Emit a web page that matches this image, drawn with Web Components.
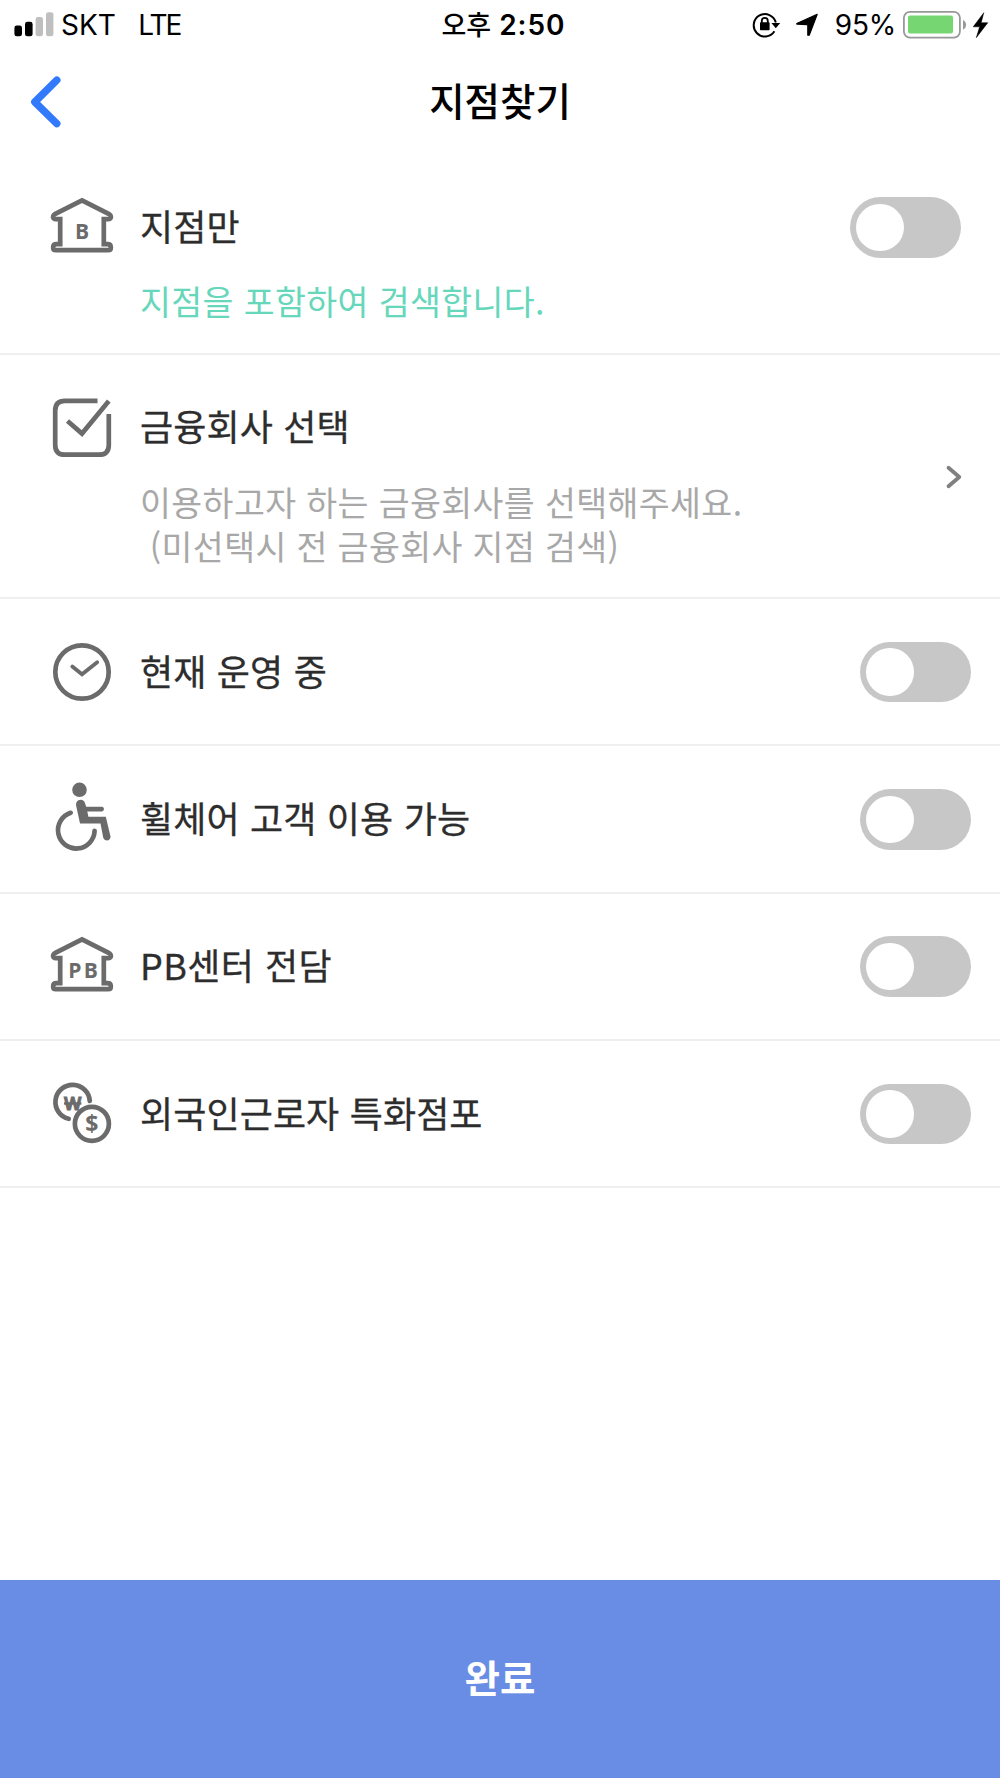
<!DOCTYPE html>
<html lang="ko">
<head>
<meta charset="UTF-8">
<meta name="viewport" content="width=device-width, initial-scale=1.0">
<title>지점찾기</title>
<style>
  :root{
    --blue: #327afb;
    --button-blue: #698de4;
    --mint: #66d7bb;
    --dark: #2d2d2d;
    --gray: #a8a8a8;
    --icon: #6b6b6b;
    --line: #efefef;
    --switch: #c7c7c7;
  }

  body{
    margin: 0;
    background-color: #fff;
    font-family: "Noto Sans CJK KR", sans-serif;
  }
</style>
</head>
<body>
<branch-screen>
  <status-bar slot="status" carrier="SKT" network="LTE" battery="95%"><span>오후</span> 2:50</status-bar>
  <nav-header slot="header">지점찾기</nav-header>

  <filter-row class="first" icon="bank" label="B">
    <span slot="title">지점만</span>
    <span slot="details" class="mint">지점을 포함하여 검색합니다.</span>
    <toggle-switch slot="control"></toggle-switch>
  </filter-row>
  <filter-row class="company" icon="check">
    <span slot="title">금융회사 선택</span>
    <span slot="details">이용하고자 하는 금융회사를 선택해주세요.<br>&nbsp;(미선택시 전 금융회사 지점 검색)</span>
    <chevron-right slot="control"></chevron-right>
  </filter-row>
  <filter-row icon="clock">
    <span slot="title">현재 운영 중</span>
    <toggle-switch slot="control"></toggle-switch>
  </filter-row>
  <filter-row icon="wheelchair">
    <span slot="title">휠체어 고객 이용 가능</span>
    <toggle-switch slot="control"></toggle-switch>
  </filter-row>
  <filter-row class="wide" icon="bank" label="PB">
    <span slot="title">PB센터 전담</span>
    <toggle-switch slot="control"></toggle-switch>
  </filter-row>
  <filter-row icon="coins">
    <span slot="title">외국인근로자 특화점포</span>
    <toggle-switch slot="control"></toggle-switch>
  </filter-row>

  <done-button slot="footer">완료</done-button>
</branch-screen>

<script>
class BaseElement extends HTMLElement {
  constructor(){
    super();
    this.attachShadow({mode: 'open'});
  }

  connectedCallback(){
    const template = document.createElement('template');
    template.innerHTML = this.getStyles() + this.getTemplate();
    this.shadowRoot.replaceChildren(template.content.cloneNode(true));
  }
}

class BranchScreen extends BaseElement {
  getTemplate(){
    return `
      <slot name="status"></slot>
      <slot name="header"></slot>
      <main><slot></slot></main>
      <slot name="footer"></slot>
    `;
  }

  getStyles(){
    return `
    <style>
      :host{
        display: flex;
        flex-direction: column;
        width: 1000px;
        height: 1778px;
        overflow: hidden;
      }

      main{
        flex: 1;
      }
    </style>
    `;
  }
}

class StatusBar extends BaseElement {
  getTemplate(){
    return `
      <div class="side">
        <svg class="signal" width="40" height="26" viewBox="14 12 40 26">
          <rect x="14.4" y="25.5" width="7.6" height="10.8" rx="2.4"/>
          <rect x="25" y="21.8" width="7.6" height="14.5" rx="2.4"/>
          <rect x="35.6" y="17" width="7.4" height="19.3" rx="2.4" fill="#bfbfbf"/>
          <rect x="46" y="12.2" width="7.4" height="24.1" rx="2.4" fill="#bfbfbf"/>
        </svg>
        <span class="carrier">${this.getAttribute('carrier')}</span>
        <span class="network">${this.getAttribute('network')}</span>
      </div>
      <div class="time"><slot></slot></div>
      <div class="side right">
        <svg width="68" height="28" viewBox="752 11 68 28">
          <path d="M774.4 31.3A11.2 11.2 0 1 1 775.8 22.6" fill="none" stroke="#000" stroke-width="2"/>
          <path d="M771.4 23h8.8l-4.4 5.2z"/>
          <rect x="760" y="22.2" width="9.6" height="8" rx=".8"/>
          <path d="M761.8 23v-2a3 3.2 0 0 1 6 0v2" fill="none" stroke="#000" stroke-width="1.8"/>
          <path d="M817.2 14.4 809.2 35.2h-1.4V25.4q0-.8-.8-.8l-10.2-.5v-.6z" stroke="#000" stroke-width="1.2" stroke-linejoin="round"/>
        </svg>
        <span class="percent">${this.getAttribute('battery')}</span>
        <svg class="battery" width="88" height="30" viewBox="902 9.5 88 30">
          <rect x="903.9" y="11.3" width="56" height="25.8" rx="6" fill="none" stroke="#989898" stroke-width="1.8"/>
          <rect x="908" y="15" width="45" height="18" rx="2" fill="#76d672"/>
          <path d="M963 19.2q3.2 2 3.2 5t-3.2 5z" fill="#989898"/>
          <path d="M983.8 12.2 973.2 26.3h6.4l-3.3 10.9 11.5-15h-6.6z" stroke="#000" stroke-width=".5"/>
        </svg>
      </div>
    `;
  }

  getStyles(){
    return `
    <style>
      :host{
        display: grid;
        grid-template-columns: 1fr auto 1fr;
        align-items: center;
        height: 50px;
        padding: 0 10px 0 14px;
        box-sizing: border-box;
        font: 400 28px/50px Inter, "Noto Sans CJK KR", sans-serif;
        color: #000;
      }

      .side{
        display: flex;
        align-items: center;
        height: 50px;
      }

      .right{
        justify-content: flex-end;
      }

      .carrier{
        margin-left: 7px;
      }

      .network{
        margin-left: 22.5px;
        letter-spacing: -2px;
      }

      .time{
        padding-left: 3px;
        font-weight: 600;
        letter-spacing: 1px;
      }

      ::slotted(span){
        font: 500 27px "Noto Sans CJK KR", sans-serif;
        letter-spacing: 0;
      }

      .percent{
        margin: 0 6px 0 15px;
        letter-spacing: -.2px;
      }
    </style>
    `;
  }
}

class NavHeader extends BaseElement {
  getTemplate(){
    return `
      <svg width="34" height="54" viewBox="29 75 34 54" fill="none" stroke="var(--blue)" stroke-width="7.4" stroke-linecap="round" stroke-linejoin="round">
        <path d="M56.8 80.2 34.8 102l22 21.6"/>
      </svg>
      <h1><slot></slot></h1>
    `;
  }

  getStyles(){
    return `
    <style>
      :host{
        display: grid;
        grid-template-columns: 34px 1fr 34px;
        align-items: center;
        height: 104px;
        padding: 0 29px;
      }

      h1{
        margin: 0;
        padding-bottom: 6px;
        font-size: 38.5px;
        font-weight: 500;
        line-height: 56px;
        text-align: center;
        color: #000;
      }
    </style>
    `;
  }
}

class FilterRow extends BaseElement {
  getTemplate(){
    return `
      <filter-icon name="${this.getAttribute('icon')}" label="${this.getAttribute('label') || ''}"></filter-icon>
      <div class="text">
        <h2><slot name="title"></slot></h2>
        <p><slot name="details"></slot></p>
      </div>
      <div class="control"><slot name="control"></slot></div>
    `;
  }

  getStyles(){
    return `
    <style>
      :host{
        display: flex;
        align-items: center;
        box-sizing: border-box;
        height: 147.3px;
        padding: 0 29px 0 50px;
        border-bottom: 2px solid var(--line);
      }

      :host(.first){
        align-items: flex-start;
        height: 201px;
        padding: 37px 39px 0 50px;
      }

      :host(.company){
        align-items: flex-start;
        height: 244px;
        padding: 36px 37px 0 50px;
      }

      .text{
        flex: 1;
        margin-left: 26px;
      }

      h2{
        margin: 0;
        padding-bottom: 4px;
        font-size: 36px;
        font-weight: 400;
        line-height: 68px;
        color: var(--dark);
        letter-spacing: .1px;
        word-spacing: .2px;
        -webkit-text-stroke: .3px;
      }

      :host(.wide) h2{
        letter-spacing: .4px;
      }

      p{
        margin: 0;
        font-size: 33.6px;
        font-weight: 400;
        line-height: 43.5px;
        color: var(--gray);
        letter-spacing: .4px;
      }

      :host(.first) p{
        margin-top: 16px;
      }

      :host(.company) p{
        margin-top: 17px;
      }

      ::slotted(.mint){
        color: var(--mint);
      }

      .control{
        padding-top: 1px;
      }

      :host(.first) .control{
        padding-top: 6px;
      }

      :host(.company) .control{
        padding-top: 73px;
      }
    </style>
    `;
  }
}

class FilterIcon extends BaseElement {
  getTemplate(){
    const label = this.getAttribute('label');
    const icons = {
      bank: `
        <path d="M32 9.4 58.6 22.8Q61 24.3 60.9 26.2 60.3 28.5 57.5 28.2H53.8V53.2H57.5Q60.8 53.2 60.8 56V57Q60.8 59.2 58.3 59.2H5.7Q3.2 59.2 3.2 57V56Q3.2 53.2 6.5 53.2H10.2V28.2H6.5Q3.7 28.5 3.1 26.2 3 24.3 5.4 22.8Z"/>
        <text x="${label === 'PB' ? 34.3 : 32}" y="47.8" font-size="21" letter-spacing="${label === 'PB' ? 2.4 : 0}">${label}</text>
      `,
      check: `
        <path d="M47.5 9.8H15Q5.2 9.8 5.2 19.6V53.9Q5.2 63.7 15 63.7H49Q58.8 63.7 58.8 53.9V23"/>
        <path d="M17.5 30 32 42.6 58.8 10"/>
      `,
      clock: `
        <circle cx="32" cy="36" r="26.7"/>
        <path d="M22.3 30.6 32 38.3 47.2 26.2" stroke-width="3.8" stroke-linecap="round"/>
      `,
      wheelchair: `
        <circle class="fill" cx="29.5" cy="6.8" r="7.3"/>
        <path d="M20.7 29.8A18.3 18.3 0 1 0 44.6 47.8" stroke-linecap="round"/>
        <path class="fill" d="M26 22Q26 17 30.5 16.800 34.3 16.9 35.2 20.7L36.2 23.7H52Q54 24 54 26T52 28.400H37.3L38.4 33.8H55.8L60.5 53.5Q60.5 56.5 57.5 57.5 54 57.5 53.2 54.5L50.5 40.5H30Z"/>
      `,
      coins: `
        <path d="M39.8 23A17.2 17.2 0 1 0 18.7 40.8" stroke-linecap="round"/>
        <text class="won" x="22.7" y="31.6" font-size="18">W</text>
        <path d="M14 25.5h17.4" stroke-width="2.4"/>
        <circle cx="41.9" cy="45.8" r="17"/>
        <text x="41.9" y="54" font-size="23">$</text>
      `
    };
    return `<svg width="64" height="72" viewBox="0 0 64 72" overflow="visible">${icons[this.getAttribute('name')]}</svg>`;
  }

  getStyles(){
    return `
    <style>
      :host{
        display: block;
        width: 64px;
        height: 72px;
      }

      svg{
        display: block;
        fill: none;
        stroke: var(--icon);
        stroke-width: 4.7;
      }

      .fill,
      text{
        fill: var(--icon);
        stroke: none;
      }

      text{
        font-family: "Open Sans", sans-serif;
        font-weight: 700;
        text-anchor: middle;
      }

      .won{
        stroke: var(--icon);
        stroke-width: .8;
      }
    </style>
    `;
  }
}

class ToggleSwitch extends BaseElement {
  getTemplate(){
    return `<div class="knob"></div>`;
  }

  getStyles(){
    return `
    <style>
      :host{
        display: flex;
        align-items: center;
        box-sizing: border-box;
        width: 111px;
        height: 60.5px;
        padding: 0 6.3px;
        border-radius: 31px;
        background-color: var(--switch);
      }

      .knob{
        width: 47.5px;
        height: 47.5px;
        border-radius: 50%;
        background-color: #fff;
      }
    </style>
    `;
  }
}

class ChevronRight extends BaseElement {
  getTemplate(){
    return `
      <svg width="18" height="26" viewBox="945 464 18 26" fill="none" stroke="#808080" stroke-width="3.8" stroke-linecap="round" stroke-linejoin="round">
        <path d="M948.5 467.8 959.3 477l-10.8 9.3"/>
      </svg>
    `;
  }

  getStyles(){
    return `
    <style>
      :host,
      svg{
        display: block;
      }
    </style>
    `;
  }
}

class DoneButton extends BaseElement {
  getTemplate(){
    return `<button><slot></slot></button>`;
  }

  getStyles(){
    return `
    <style>
      :host{
        display: block;
      }

      button{
        display: block;
        width: 100%;
        height: 198.5px;
        padding: 0 0 5px;
        border: 0;
        background-color: var(--button-blue);
        color: #fff;
        font-family: inherit;
        font-size: 38.5px;
        font-weight: 700;
      }
    </style>
    `;
  }
}

customElements.define('branch-screen', BranchScreen);
customElements.define('status-bar', StatusBar);
customElements.define('nav-header', NavHeader);
customElements.define('filter-row', FilterRow);
customElements.define('filter-icon', FilterIcon);
customElements.define('toggle-switch', ToggleSwitch);
customElements.define('chevron-right', ChevronRight);
customElements.define('done-button', DoneButton);
</script>
</body>
</html>
